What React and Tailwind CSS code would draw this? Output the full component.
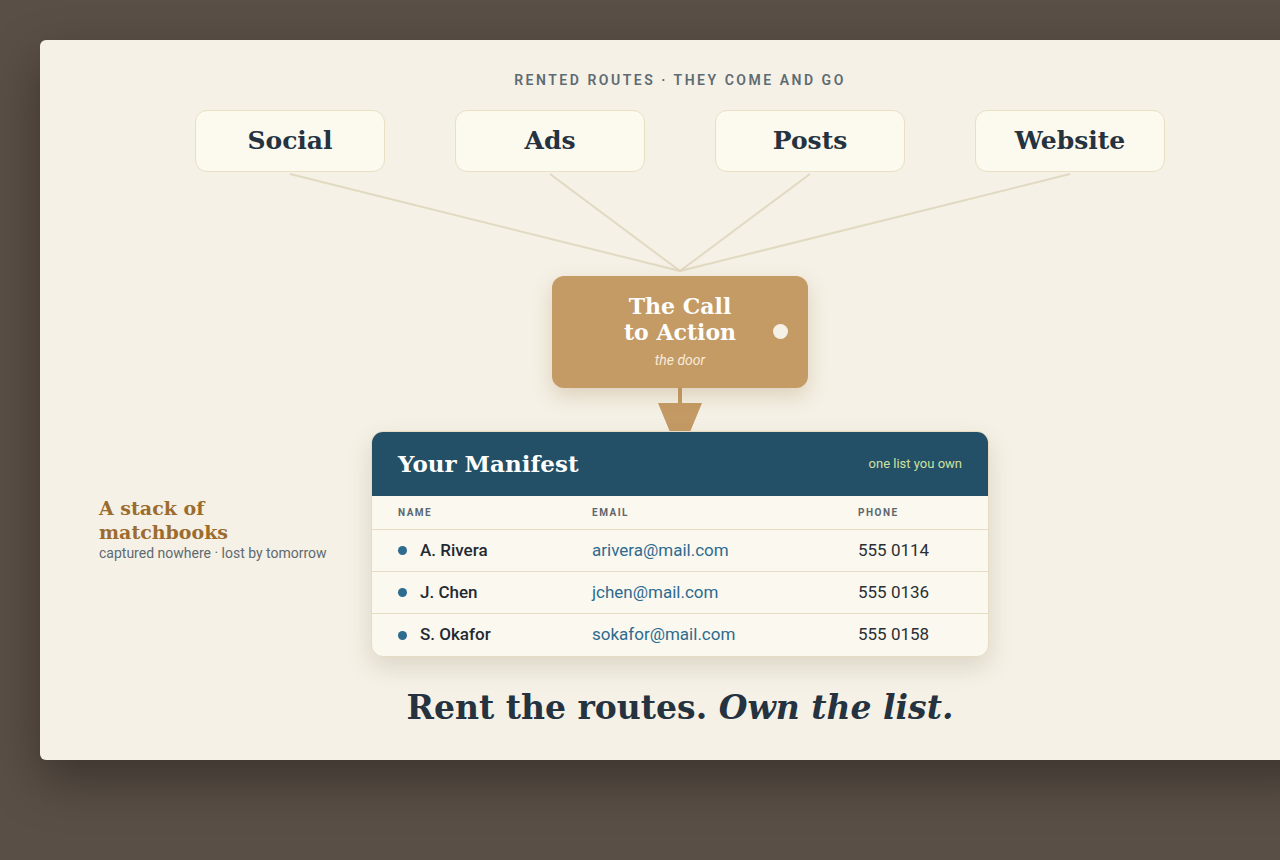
export default function App() {
  const serif = { fontFamily: '"DejaVu Serif", "Liberation Serif", serif' };
  const sans = { fontFamily: 'Roboto, "Liberation Sans", sans-serif' };
  const rows = [
    ["A. Rivera", "arivera@mail.com", "555 0114"],
    ["J. Chen", "jchen@mail.com", "555 0136"],
    ["S. Okafor", "sokafor@mail.com", "555 0158"],
  ];
  return (
    <div className="w-[1280px] h-[860px] bg-[#5a4f46] overflow-hidden pt-10 pl-10" style={sans}>
      <div className="relative w-[1280px] h-[720px] bg-[#f5f1e6] rounded-md shadow-[0_20px_50px_rgba(0,0,0,0.35)] flex flex-col items-center pt-[31px]">
        <svg className="absolute left-0 top-0 pointer-events-none" width="1280" height="300">
          {[250, 510, 770, 1030].map((x) => (
            <line key={x} x1={x} y1="134" x2="640" y2="231" stroke="#e2d9c2" strokeWidth="2" />
          ))}
        </svg>
        <div className="text-[14px] font-semibold tracking-[0.18em] text-[#5d6b73] h-[18px] leading-[18px]">RENTED ROUTES · THEY COME AND GO</div>
        <div className="relative flex gap-[70px] mt-[21px]">
          {["Social", "Ads", "Posts", "Website"].map((t) => (
            <div key={t} className="w-[190px] h-[62px] rounded-xl bg-[#fcf9ef] border border-[#e9dfc3] flex items-center justify-center text-[25px] font-bold text-[#253240]" style={serif}>{t}</div>
          ))}
        </div>
        <div className="relative mt-[104px] w-[256px] h-[112px] rounded-xl bg-[#c49a65] shadow-[0_8px_20px_rgba(150,110,60,0.25)] flex flex-col items-center justify-center">
          <div className="text-white font-bold text-[22px] leading-[26px] text-center" style={serif}>The Call<br />to Action</div>
          <div className="text-[#f8ecd8] italic text-[14px] mt-[5px]">the door</div>
          <div className="absolute right-[20px] top-[48px] w-[15px] h-[15px] rounded-full bg-[#f5f1e6]" />
        </div>
        <svg width="46" height="45" className="-mt-px">
          <rect x="21" y="1" width="4" height="16" fill="#c49a65" />
          <polygon points="1,16 45,16 33,45 13,45" fill="#c49a65" />
        </svg>
        <div className="relative">
          <div className="absolute right-[650px] top-[64px] w-[240px]">
            <div className="text-[19px] font-bold text-[#9c6c2e] leading-[24px]" style={serif}>A stack of matchbooks</div>
            <div className="text-[14px] text-[#5f6a70] leading-[18px]">captured nowhere · lost by tomorrow</div>
          </div>
          <div className="w-[618px] rounded-xl overflow-hidden bg-[#fbf8ef] border border-[#e6dcc3] shadow-[0_10px_25px_rgba(80,60,30,0.15)] -mt-[1px]">
            <div className="h-[64px] bg-[#234f67] flex items-center justify-between px-[26px]">
              <div className="text-white font-bold text-[23px]" style={serif}>Your Manifest</div>
              <div className="text-[#cfe0a0] text-[13px] pr-[0px]">one list you own</div>
            </div>
            <div className="grid grid-cols-[194px_266px_1fr] px-[26px] h-[34px] items-center text-[10px] font-bold tracking-[0.15em] text-[#5a6770] border-b border-[#e6dcc3]">
              <div>NAME</div><div>EMAIL</div><div>PHONE</div>
            </div>
            {rows.map((r, i) => (
              <div key={r[0]} className={"grid grid-cols-[194px_266px_1fr] px-[26px] h-[42px] items-center text-[17px] " + (i < 2 ? "border-b border-[#e6dcc3]" : "")}>
                <div className="flex items-center gap-[13px] font-medium text-[#1f2a33]"><span className="w-[9px] h-[9px] rounded-full bg-[#2d6b8f]" />{r[0]}</div>
                <div className="text-[#2d6b8f]">{r[1]}</div>
                <div className="text-[#2a2f33]">{r[2]}</div>
              </div>
            ))}
          </div>
        </div>
        <div className="mt-[26px] text-[33px] font-bold text-[#253240]" style={serif}>Rent the routes. <span className="italic">Own the list.</span></div>
      </div>
    </div>
  );
}
